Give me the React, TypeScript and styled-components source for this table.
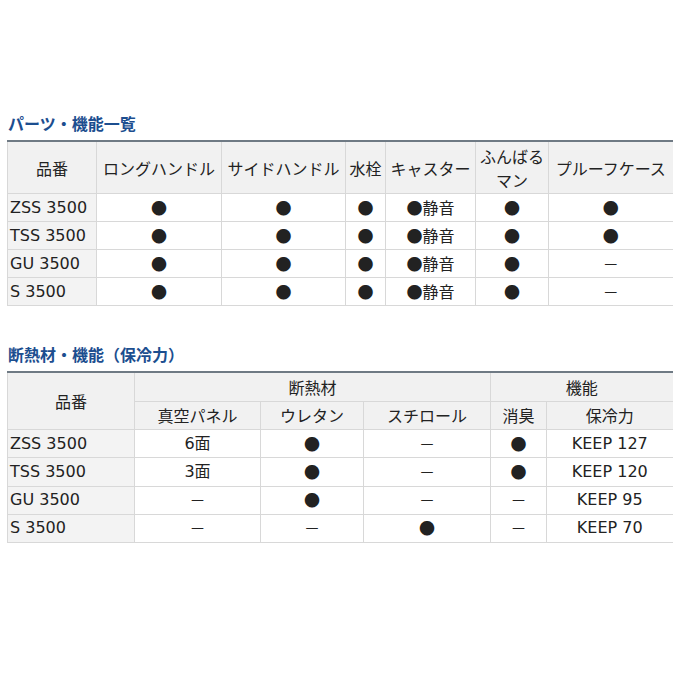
import React from "react";
import styled, { createGlobalStyle } from "styled-components";

const Global = createGlobalStyle`
  html, body { margin: 0; padding: 0; background: #fff; }
  body { font-family: "DejaVu Sans", "Noto Sans CJK JP", sans-serif; color: #222; }
`;

const Page = styled.div`
  width: 680px;
  padding: 111px 8px 0 7px;
  box-sizing: border-box;
`;

const Section = styled.section<{ $gap?: number }>`
  margin-bottom: ${(p) => p.$gap ?? 0}px;
`;

const Title = styled.h2`
  margin: 0 0 5px 1px;
  font-family: "Noto Sans CJK JP", sans-serif;
  font-size: 16px;
  line-height: 24px;
  font-weight: 700;
  color: #1c4e8f;
  letter-spacing: 0;
`;

const Table = styled.table`
  width: 665px;
  table-layout: fixed;
  border-collapse: collapse;
  border-top: 2px solid #6f7a84;
  font-size: 16px;
`;

const Th = styled.th<{ $h: number }>`
  height: ${(p) => p.$h}px;
  padding: 0 2px;
  background: #f1f1f1;
  font-weight: 400;
  font-family: "Noto Sans CJK JP", sans-serif;
  line-height: 24px;
  text-align: center;
  vertical-align: middle;
  border: 1px solid #d8d8d8;
  border-top: none;
  &:last-child { border-right: none; }
`;

const Td = styled.td<{ $h: number }>`
  height: ${(p) => p.$h}px;
  padding: 0 2px;
  text-align: center;
  vertical-align: middle;
  line-height: 20px;
  border: 1px solid #d8d8d8;
  &:last-child { border-right: none; }
`;

const ModelTd = styled(Td)`
  text-align: left;
  background: #f3f3f3;
  padding-left: 2px;
`;

const Dot = styled.span`
  font-family: "Noto Sans CJK JP", sans-serif;
  font-size: 16px;
`;

const Jp = styled.span`
  font-family: "Noto Sans CJK JP", sans-serif;
`;

const Dash = styled.span`
  font-family: "Noto Sans CJK JP", sans-serif;
`;

type Cell = "dot" | "dash" | "quiet" | string;

const renderCell = (c: Cell) => {
  if (c === "dot") return <Dot>●</Dot>;
  if (c === "dash") return <Dash>－</Dash>;
  if (c === "quiet") return <Jp>●静音</Jp>;
  return c;
};

const partsCols = [89, 125, 124, 40, 90, 73, 124];
const partsHead = ["品番", "ロングハンドル", "サイドハンドル", "水栓", "キャスター", "ふんばるマン", "プルーフケース"];
const partsRows: [string, Cell[]][] = [
  ["ZSS 3500", ["dot", "dot", "dot", "quiet", "dot", "dot"]],
  ["TSS 3500", ["dot", "dot", "dot", "quiet", "dot", "dot"]],
  ["GU 3500", ["dot", "dot", "dot", "quiet", "dot", "dash"]],
  ["S 3500", ["dot", "dot", "dot", "quiet", "dot", "dash"]],
];

const insCols = [127, 126, 103, 127, 56, 126];
const insRows: [string, Cell[]][] = [
  ["ZSS 3500", ["6面", "dot", "dash", "dot", "KEEP 127"]],
  ["TSS 3500", ["3面", "dot", "dash", "dot", "KEEP 120"]],
  ["GU 3500", ["dash", "dot", "dash", "dash", "KEEP 95"]],
  ["S 3500", ["dash", "dash", "dot", "dash", "KEEP 70"]],
];

const Body = ({ rows, h }: { rows: [string, Cell[]][]; h: number }) => (
  <tbody>
    {rows.map(([m, cells]) => (
      <tr key={m}>
        <ModelTd $h={h}>{m}</ModelTd>
        {cells.map((c, i) => (
          <Td key={i} $h={h}>
            {renderCell(c)}
          </Td>
        ))}
      </tr>
    ))}
  </tbody>
);

export default function App() {
  return (
    <>
      <Global />
      <Page>
        <Section $gap={36}>
          <Title>パーツ・機能一覧</Title>
          <Table>
            <colgroup>
              {partsCols.map((w, i) => (
                <col key={i} style={{ width: w }} />
              ))}
            </colgroup>
            <thead>
              <tr>
                {partsHead.map((h) => (
                  <Th key={h} $h={51}>
                    {h === "ふんばるマン" ? (
                      <>
                        ふんばる
                        <br />
                        マン
                      </>
                    ) : (
                      h
                    )}
                  </Th>
                ))}
              </tr>
            </thead>
            <Body rows={partsRows} h={27} />
          </Table>
        </Section>
        <Section>
          <Title>断熱材・機能（保冷力）</Title>
          <Table>
            <colgroup>
              {insCols.map((w, i) => (
                <col key={i} style={{ width: w }} />
              ))}
            </colgroup>
            <thead>
              <tr>
                <Th rowSpan={2} $h={27.5}>品番</Th>
                <Th colSpan={3} $h={27.5}>断熱材</Th>
                <Th colSpan={2} $h={27.5}>機能</Th>
              </tr>
              <tr>
                <Th $h={27.5}>真空パネル</Th>
                <Th $h={27.5}>ウレタン</Th>
                <Th $h={27.5}>スチロール</Th>
                <Th $h={27.5}>消臭</Th>
                <Th $h={27.5}>保冷力</Th>
              </tr>
            </thead>
            <Body rows={insRows} h={27.25} />
          </Table>
        </Section>
      </Page>
    </>
  );
}
